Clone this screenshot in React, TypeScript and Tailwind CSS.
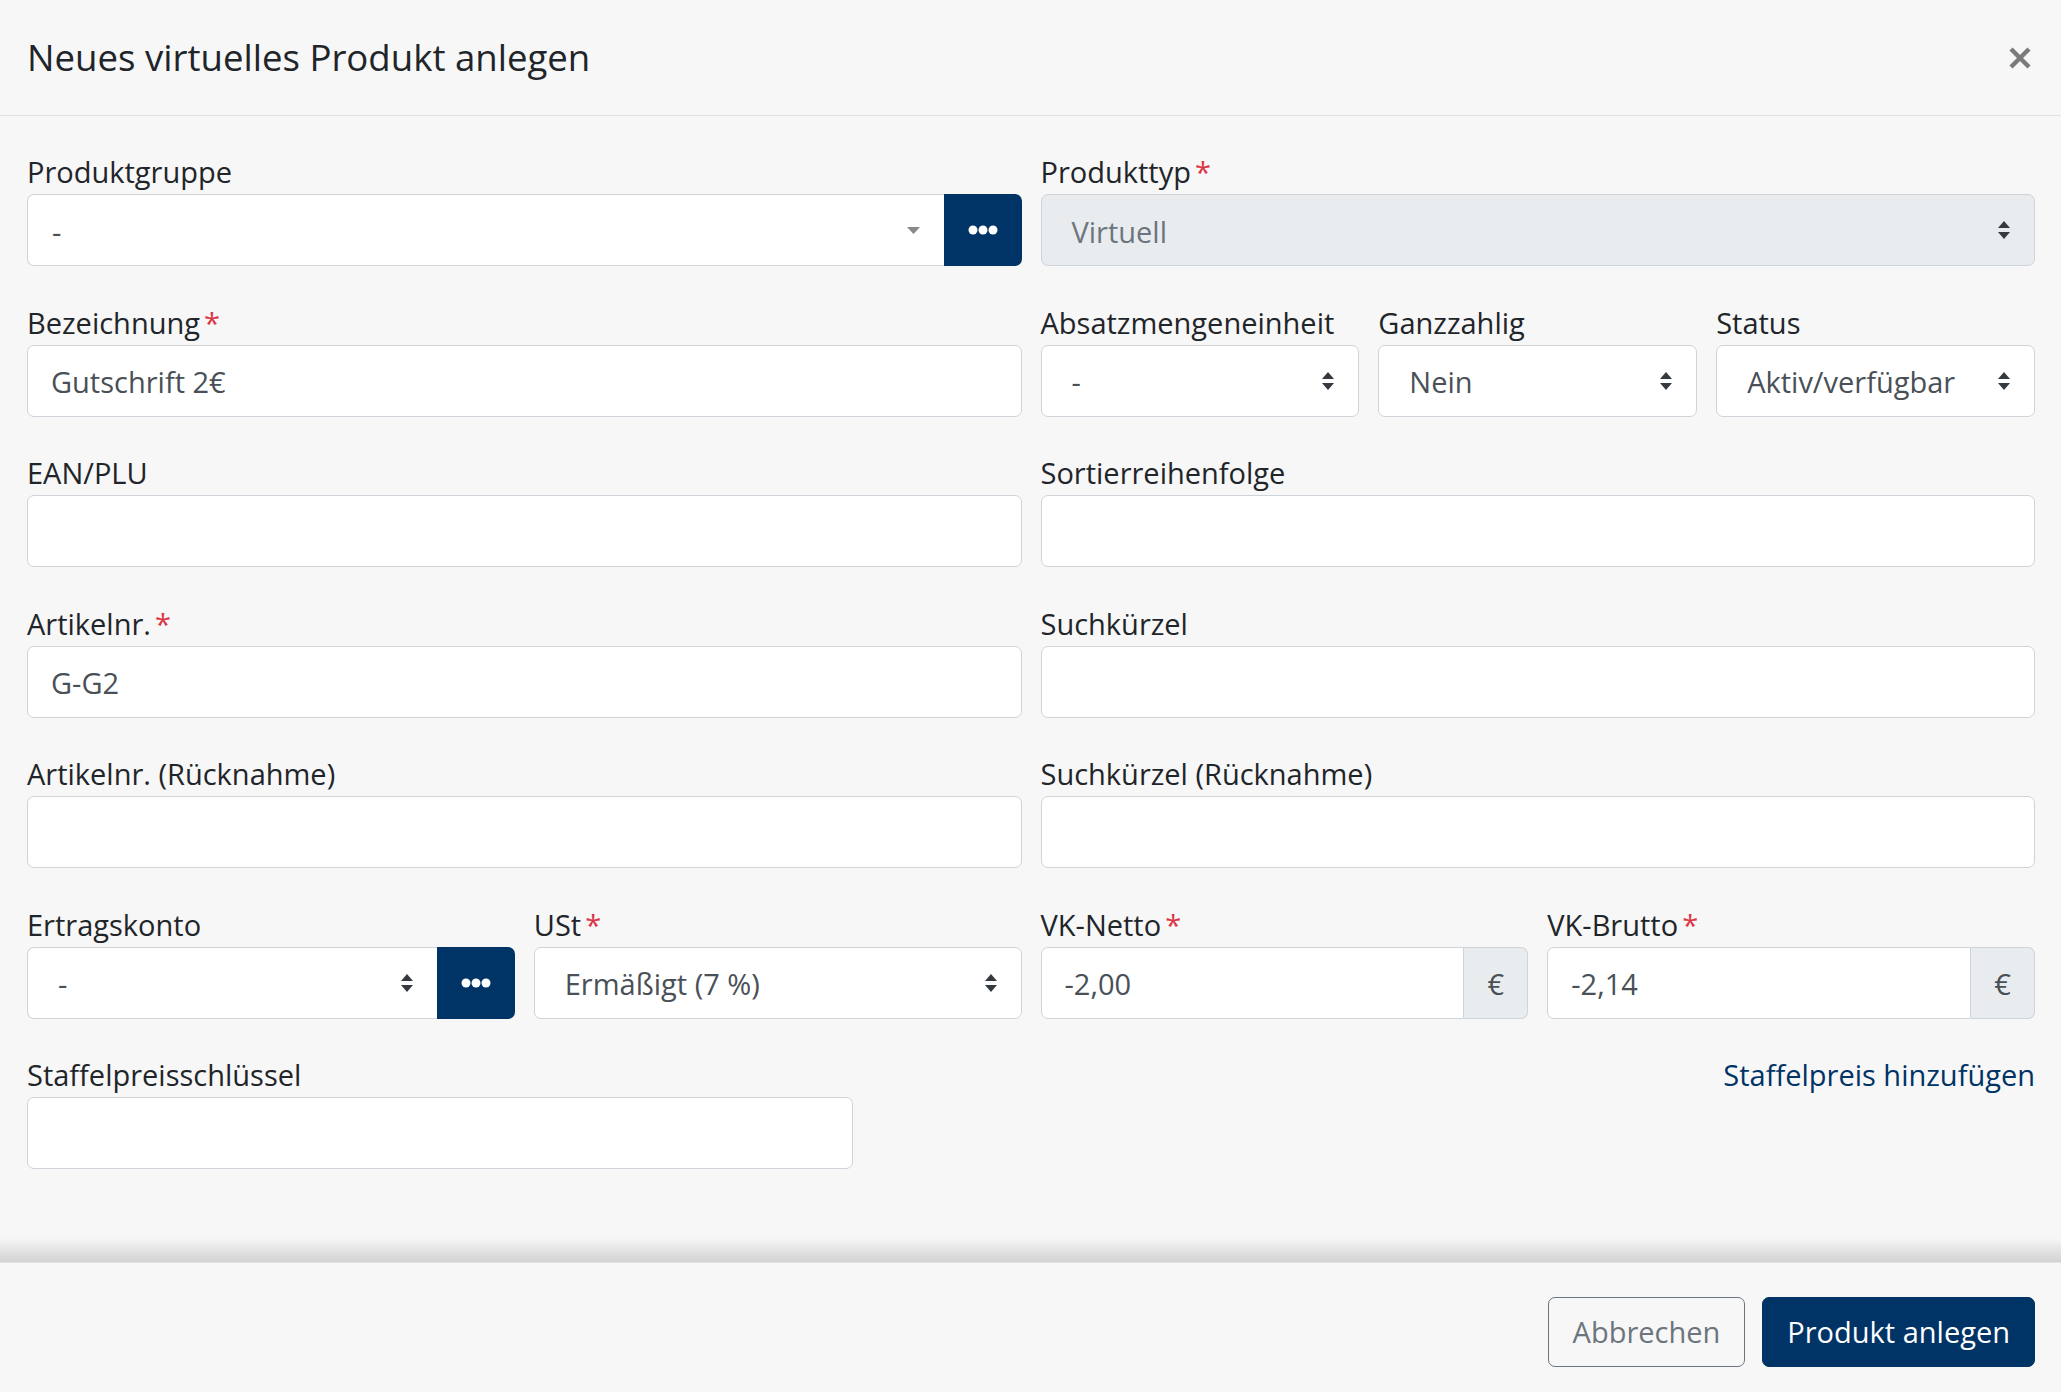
import React from 'react';

function Label({ children, required }: { children: React.ReactNode; required?: boolean }) {
  return (
    <label className="block h-[44px] leading-[44px] text-[29px] text-[#212529] whitespace-nowrap">
      {children}
      {required && <span className="ml-[4px] text-[#dc3545]">*</span>}
    </label>
  );
}

function UpDown() {
  return (
    <svg width="14" height="20" viewBox="0 0 14 20" className="shrink-0">
      <path d="M1 8 L7 1 L13 8 Z M1 12 L7 19 L13 12 Z" fill="#343a40" />
    </svg>
  );
}

function Dots() {
  return (
    <svg width="30" height="10" viewBox="0 0 30 10">
      <circle cx="5" cy="5" r="4.5" fill="white" />
      <circle cx="15" cy="5" r="4.5" fill="white" />
      <circle cx="25" cy="5" r="4.5" fill="white" />
    </svg>
  );
}

function Select({ value, disabled }: { value: string; disabled?: boolean }) {
  return (
    <div
      className={`h-[72px] flex items-center justify-between border border-[#ced4da] rounded-[7px] pl-[30px] pr-[23px] text-[29px] ${
        disabled ? 'bg-[#e9ecef] text-[#6c757d]' : 'bg-white text-[#495057]'
      }`}
    >
      <span className="whitespace-nowrap pt-[3px]">{value}</span>
      <UpDown />
    </div>
  );
}

function Input({ value }: { value?: string }) {
  return (
    <div className="h-[72px] flex items-center border border-[#ced4da] rounded-[7px] bg-white px-[23px] pt-[3px] text-[29px] text-[#495057]">
      {value}
    </div>
  );
}

function EuroInput({ value }: { value: string }) {
  return (
    <div className="h-[72px] flex">
      <div className="flex-1 flex items-center border border-[#ced4da] rounded-l-[7px] bg-white pl-[23px] pt-[3px] text-[29px] text-[#495057]">
        {value}
      </div>
      <div className="w-[64px] flex items-center justify-center border border-l-0 border-[#ced4da] rounded-r-[7px] bg-[#e9ecef] pt-[3px] text-[29px] text-[#495057]">
        €
      </div>
    </div>
  );
}

export default function App() {
  return (
    <div className="h-screen flex flex-col bg-[#f7f7f7] font-['Open_Sans',sans-serif] text-[29px]">
      {/* header */}
      <div className="h-[116px] shrink-0 flex items-center justify-between border-b border-[#dee2e6] pl-[27px] pr-[30px]">
        <h1 className="text-[36.6px] text-[#212529] leading-none">Neues virtuelles Produkt anlegen</h1>
        <svg width="22" height="22" viewBox="0 0 22 22">
          <path d="M2 2 L20 20 M20 2 L2 20" stroke="#7b7b7b" strokeWidth="4.5" />
        </svg>
      </div>

      {/* body */}
      <div className="flex-1 flex flex-col">
        <div className="grid grid-cols-12 gap-x-[19px] gap-y-[34.5px] pl-[27px] pr-[26px] pt-[34px]">
          <div className="col-span-6">
            <Label>Produktgruppe</Label>
            <div className="h-[72px] flex">
              <div className="flex-1 flex items-center justify-between border border-[#ced4da] border-r-0 rounded-l-[7px] bg-white pl-[24px] pr-[24px] text-[#495057]">
                <span className="pt-[3px]">-</span>
                <svg width="13" height="7" viewBox="0 0 13 7">
                  <path d="M0 0 H13 L6.5 7 Z" fill="#888" />
                </svg>
              </div>
              <button className="w-[78px] flex items-center justify-center bg-[#003366] rounded-r-[7px]">
                <Dots />
              </button>
            </div>
          </div>
          <div className="col-span-6">
            <Label required>Produkttyp</Label>
            <Select value="Virtuell" disabled />
          </div>

          <div className="col-span-6">
            <Label required>Bezeichnung</Label>
            <Input value="Gutschrift 2€" />
          </div>
          <div className="col-span-2">
            <Label>Absatzmengeneinheit</Label>
            <Select value="-" />
          </div>
          <div className="col-span-2">
            <Label>Ganzzahlig</Label>
            <Select value="Nein" />
          </div>
          <div className="col-span-2">
            <Label>Status</Label>
            <Select value="Aktiv/verfügbar" />
          </div>

          <div className="col-span-6">
            <Label>EAN/PLU</Label>
            <Input />
          </div>
          <div className="col-span-6">
            <Label>Sortierreihenfolge</Label>
            <Input />
          </div>

          <div className="col-span-6">
            <Label required>Artikelnr.</Label>
            <Input value="G-G2" />
          </div>
          <div className="col-span-6">
            <Label>Suchkürzel</Label>
            <Input />
          </div>

          <div className="col-span-6">
            <Label>Artikelnr. (Rücknahme)</Label>
            <Input />
          </div>
          <div className="col-span-6">
            <Label>Suchkürzel (Rücknahme)</Label>
            <Input />
          </div>

          <div className="col-span-3">
            <Label>Ertragskonto</Label>
            <div className="h-[72px] flex">
              <div className="flex-1 flex items-center justify-between border border-[#ced4da] border-r-0 rounded-l-[7px] bg-white pl-[30px] pr-[23px] text-[#495057]">
                <span className="pt-[3px]">-</span>
                <UpDown />
              </div>
              <button className="w-[78px] flex items-center justify-center bg-[#003366] rounded-r-[7px]">
                <Dots />
              </button>
            </div>
          </div>
          <div className="col-span-3">
            <Label required>USt</Label>
            <Select value="Ermäßigt (7 %)" />
          </div>
          <div className="col-span-3">
            <Label required>VK-Netto</Label>
            <EuroInput value="-2,00" />
          </div>
          <div className="col-span-3">
            <Label required>VK-Brutto</Label>
            <EuroInput value="-2,14" />
          </div>

          <div className="col-span-5">
            <Label>Staffelpreisschlüssel</Label>
            <Input />
          </div>
          <div className="col-span-7 flex justify-end">
            <a href="#" className="h-[44px] leading-[44px] text-[#003366]">Staffelpreis hinzufügen</a>
          </div>
        </div>
        <div className="flex-1" />
        <div className="h-[24px] bg-gradient-to-b from-[#f7f7f7] to-[#d2d2d2]" />
      </div>

      {/* footer */}
      <div className="h-[130px] shrink-0 flex items-center justify-end gap-[17px] border-t border-[#e2e2e2] pr-[26px] pt-[8px]">
        <button className="h-[70px] px-[24px] border border-[#6c757d] rounded-[7px] text-[29px] text-[#6c757d]">
          Abbrechen
        </button>
        <button className="h-[70px] px-[24px] border border-[#003366] bg-[#003366] rounded-[7px] text-[29px] text-white">
          Produkt anlegen
        </button>
      </div>
    </div>
  );
}
